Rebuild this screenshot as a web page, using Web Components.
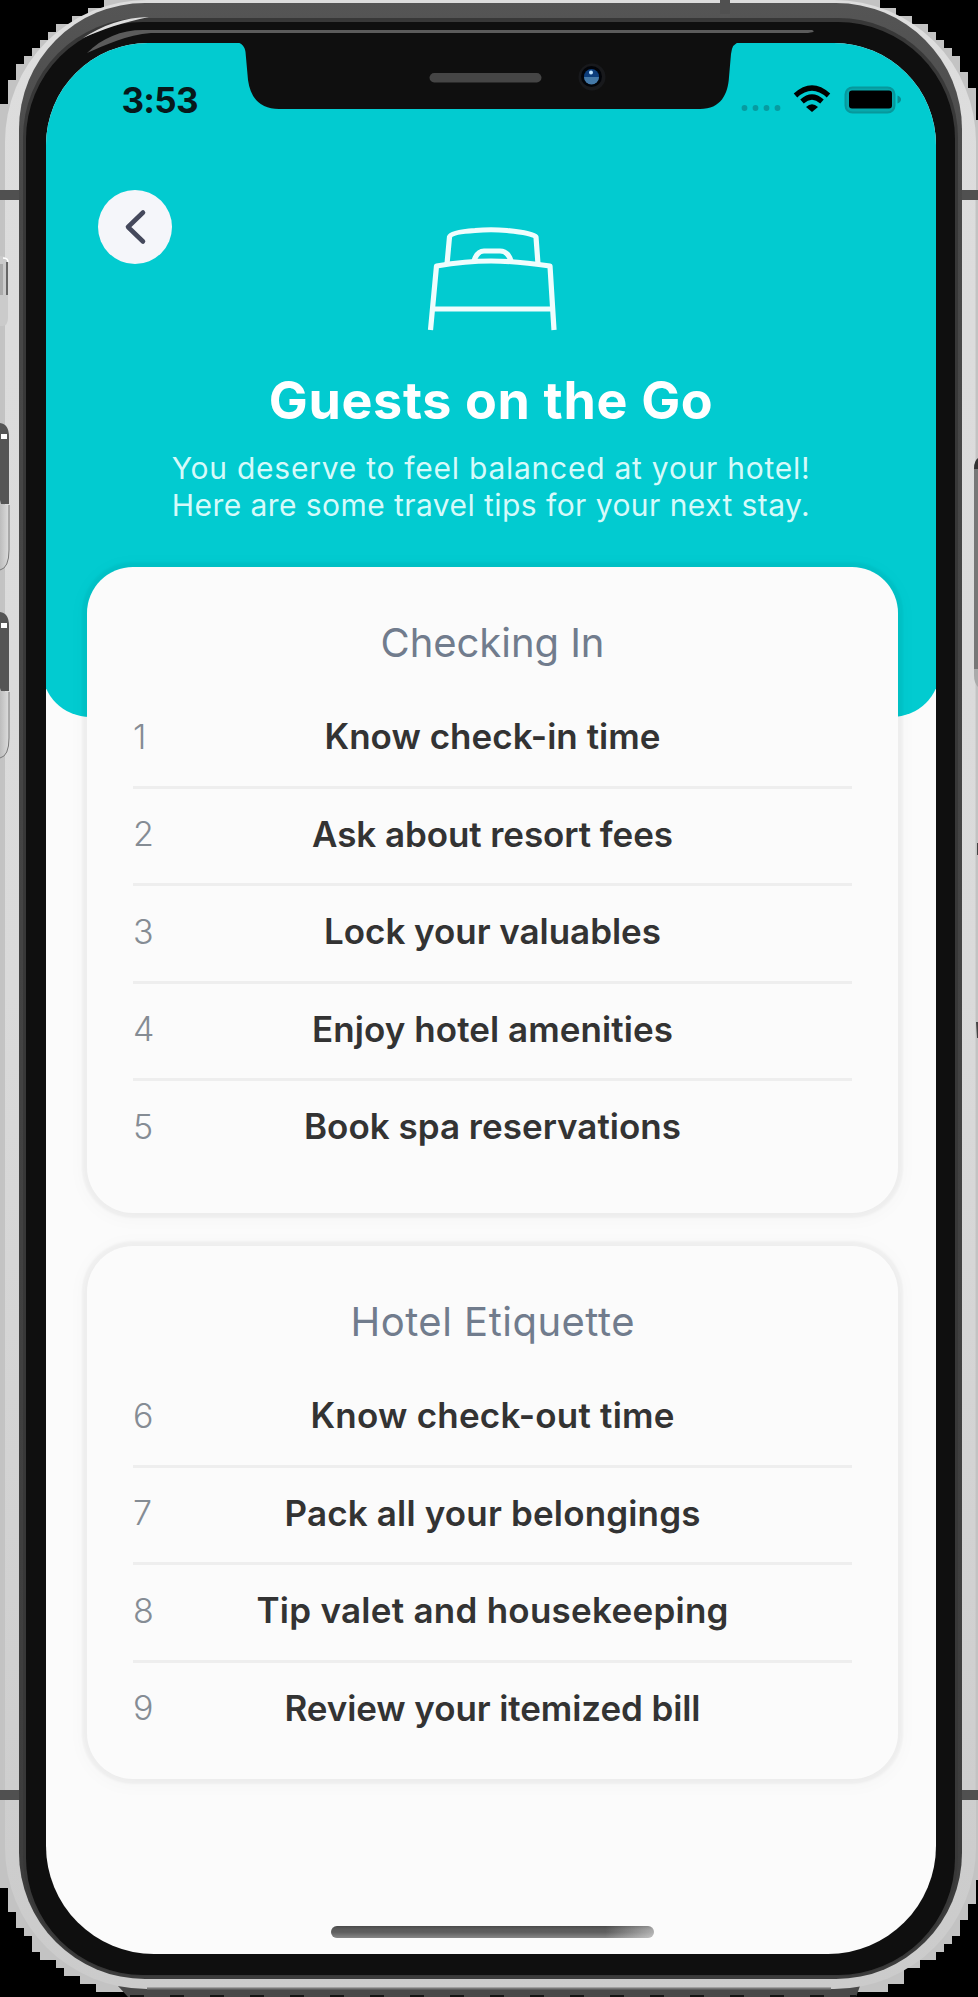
<!DOCTYPE html>
<html lang="en"><head><meta charset="utf-8"><title>Guests on the Go</title>
<style>
html,body{margin:0;background:#000}
body{width:978px;height:1997px;overflow:hidden;font-family:Inter,"Liberation Sans",sans-serif}
</style></head><body>
<phone-frame>
  <status-bar></status-bar>
  <guide-header>
    <fit-text slot="title" width="444">Guests on the Go</fit-text>
    <fit-text slot="line" width="638">You deserve to feel balanced at your hotel!</fit-text>
    <fit-text slot="line" width="638">Here are some travel tips for your next stay.</fit-text>
  </guide-header>
  <tip-card style="height:646px">
    <fit-text slot="heading" width="224">Checking In</fit-text>
    <tip-row number="1" width="336">Know check-in time</tip-row>
    <tip-row number="2" width="361">Ask about resort fees</tip-row>
    <tip-row number="3" width="337">Lock your valuables</tip-row>
    <tip-row number="4" width="361">Enjoy hotel amenities</tip-row>
    <tip-row number="5" width="377" last>Book spa reservations</tip-row>
  </tip-card>
  <tip-card style="height:533px;margin-top:1px">
    <fit-text slot="heading" width="284">Hotel Etiquette</fit-text>
    <tip-row number="6" width="364">Know check-out time</tip-row>
    <tip-row number="7" width="416">Pack all your belongings</tip-row>
    <tip-row number="8" width="472">Tip valet and housekeeping</tip-row>
    <tip-row number="9" width="416" last>Review your itemized bill</tip-row>
  </tip-card>
</phone-frame>
<script>
const define=(name,html,ready)=>customElements.define(name,class extends HTMLElement{
  connectedCallback(){
    if(this.shadowRoot)return;
    const t=document.createElement('template');t.innerHTML=html;
    this.attachShadow({mode:'open'}).append(t.content.cloneNode(true));
    if(ready)ready(this,this.shadowRoot);
  }
});

define('phone-frame',`<style>
:host{display:flow-root;position:relative;width:978px;height:1997px;overflow:hidden}
svg{position:absolute;left:0;top:0}
.screen{box-sizing:border-box;position:relative;width:890.500px;height:1911px;margin:43px 0 0 45.500px;background:#fbfbfb;border-radius:102px 102px 108px 108px;overflow:hidden}
.content{display:flex;flex-direction:column;gap:32px}
.top{pointer-events:none}
</style>
<svg width="978" height="1997" viewBox="0 0 978 1997">
<defs><linearGradient id="body" x2="0" y2="1"><stop stop-color="#ddd"/><stop offset=".5" stop-color="#dadada"/><stop offset="1" stop-color="#cbcbcb"/></linearGradient>
<linearGradient id="rim" x2="0" y2="1"><stop stop-color="#555"/><stop offset=".1" stop-color="#484848"/><stop offset="1" stop-color="#3c3c3c"/></linearGradient>
<linearGradient id="btn" x2="1"><stop stop-color="#bdbdbd"/><stop offset="1" stop-color="#ddd"/></linearGradient></defs>
<rect width="978" height="1997" fill="#c3c3c3"/>
<path d="M0 0H104V8H88V16H72V24H56V32H48V40H40V48H32V56H24V64H16V80H8V104H0ZM978 0H880V8H896V16H912V24H928V32H936V40H944V48H952V56H960V72H968V88H976V120H978ZM0 1888H8V1912H16V1928H24V1936H32V1952H40V1960H56V1968H64V1976H80V1984H96V1992H128V1997H0ZM978 1880H976V1904H968V1920H960V1936H952V1944H944V1952H936V1960H920V1968H904V1984H888V1992H856V1997H978Z"/>
<path d="M118 1986H860L856 1997H128Z" fill="#494949"/>
<path d="M130 1996H856" stroke="#151515" stroke-width="2" stroke-dasharray="14 26"/>
<rect x="5" y="0" width="971" height="1989" rx="142" fill="url(#body)"/>
<path d="M147 1988.500H831" stroke="#777" stroke-width="2"/>
<path d="M3.500 200V1790M976 200V1790" stroke="#c4c4c4"/>
<path d="M0 190H20V200H0ZM958 190H978V200H958ZM0 1790H20V1800H0ZM958 1790H978V1800H958Z" fill="#505050"/>
<rect x="19" y="3" width="943" height="1976" rx="126" fill="url(#rim)"/>
<path d="M720 0H730V14H720Z" fill="#505050"/>
<rect x="23" y="18" width="935" height="1958" rx="120" fill="#383838"/>
<rect x="26" y="22" width="929" height="1953" rx="117" fill="#0f0f0f"/>
<path d="M83 38C101 26 125 17 149 17C124 22 103 29 83 38Z" fill="#ddd"/>
<path d="M87 53C102 38 121 30 143 30H812Q817 32 808 33H151C127 35 105 45 87 53Z" fill="#5b5b5b"/>
<path d="M0 423Q9 424 9 437V504H1L0 500Z" fill="#555"/><path d="M0 505H9V550Q9 568 0 570Z" fill="url(#btn)"/><path d="M9 505V550Q9 568 0 570" fill="none" stroke="#777"/><path d="M1 434h6v5H1z" fill="#fff"/>
<path d="M0 612Q9 613 9 626V691H1L0 688Z" fill="#555"/><path d="M0 692H9V738Q9 756 0 758Z" fill="url(#btn)"/><path d="M9 692V738Q9 756 0 758" fill="none" stroke="#777"/><path d="M1 623h6v5H1z" fill="#fff"/>
<path d="M0 256Q8 256 8 264V318Q8 325 3 326H0Z" fill="#cbcbcb"/><path d="M0 264H3V295H0Z" fill="#aaa"/><path d="M7 262V295" stroke="#666" stroke-width="2"/><path d="M3 258Q8 258 8 262" fill="none" stroke="#fff" stroke-width="1.500"/>
<path d="M978 459Q974 462 974 469V669H978Z" fill="#777"/><path d="M974 669V675Q974 683 978 687V669Z" fill="#aaa"/><path d="M978 458Q974 461 974 469H978Z" fill="#333"/><path d="M977 843h1v12h-1zM976 1022h2v16h-1z" fill="#444"/>
</svg>
<div class="screen"><div class="content"><slot></slot></div></div>
<svg class="top" width="978" height="1997" viewBox="0 0 978 1997">
<path d="M236 42C242 43 245 47 245.500 52L248 80Q252 109 279 109H700C721 109 728 94 729 77L731 54Q732 43 740 42Z" fill="#0f0f0f"/>
<rect x="429.500" y="73" width="112" height="9.500" rx="4.700" fill="#454545"/>
<circle cx="592" cy="77" r="13.500" fill="#18191c"/><circle cx="591.500" cy="76.500" r="10.500" fill="#020409"/><circle cx="591.500" cy="76.500" r="7.500" fill="#0c3d7c"/><path d="M584 77H599A7.500 7.500 0 0 1 584 77" fill="#4479a8"/><circle cx="591" cy="72.500" r="2" fill="#c0e4ff"/>
<defs><linearGradient id="home"><stop stop-color="#555"/><stop offset=".85" stop-color="#555"/><stop offset="1" stop-color="#aaa"/></linearGradient>
<linearGradient id="sheen" x2="0" y2="1"><stop stop-color="#000" stop-opacity=".15"/><stop offset=".5" stop-color="#fff" stop-opacity=".05"/><stop offset="1" stop-color="#fff" stop-opacity=".3"/></linearGradient></defs>
<rect x="331" y="1926" width="323" height="12" rx="6" fill="url(#home)"/><rect x="331" y="1926" width="323" height="12" rx="6" fill="url(#sheen)"/>
</svg>`);

define('status-bar',`<style>
:host{position:absolute;left:0;right:0;top:0;height:110px;z-index:2;color:#07191b}
.bar{display:flex;justify-content:space-between;align-items:flex-start;padding:36px 35px 0 75.500px}
b{font-weight:650;font-size:35px;line-height:42px;width:78px}
svg{display:block}
</style><div class="bar"><b><fit-text width="77">3:53</fit-text></b>
<svg width="165" height="40" viewBox="736 79 165 40">
<g fill="#079ba0"><circle cx="744.500" cy="108" r="2.900"/><circle cx="755.500" cy="108" r="2.900"/><circle cx="766.500" cy="108" r="2.900"/><circle cx="777.500" cy="108" r="2.900"/></g>
<g fill="none" stroke="#000" stroke-width="5.200"><path d="M795.500 95.500Q812 80.500 828.500 95.500"/><path d="M802 101.500Q812 92.500 822 101.500"/></g><path d="M806 107Q812 101.500 818 107L812 112Z"/>
<rect x="845.500" y="87.500" width="49" height="25" rx="7" fill="#06a9ad" stroke="#07989c" stroke-width="2"/><rect x="849" y="90.500" width="43" height="18" rx="3"/><path d="M897.500 95.500Q901 97 901 99.500T897.500 103.500Z" fill="#078e92"/>
</svg></div>`);

define('guide-header',`<style>
:host{display:block;height:492px;color:#fff}
.bg{position:absolute;left:-4px;right:-4px;top:0;height:674px;background:#02cbd0;border-radius:0 0 48px 48px}
.in{position:relative;display:flex;flex-direction:column;align-items:center;padding-top:183px}
.back{position:absolute;left:52.500px;top:147px;width:74px;height:74px;border-radius:50%;background:#f5f6fa;display:grid;place-items:center}
.title{font-size:52px;font-weight:700;line-height:60px;margin-top:39px}
.lines{font-size:30px;line-height:36.500px;margin-top:19px;color:#d6fafa}
svg{display:block}
</style><div class="bg"></div><div class="in">
<div class="back"><svg width="28" height="38" viewBox="0 0 28 38"><path d="M22 4.500L7 19L22 33.500" fill="none" stroke="#45495c" stroke-width="4.600" stroke-linecap="round" stroke-linejoin="round"/></svg></div>
<svg width="132" height="106" viewBox="425 226 132 106"><g fill="none" stroke="#effdfd" stroke-width="5.200" stroke-linejoin="round"><path d="M447 264L449.500 237Q451 232 475 230.500Q491 229 507 230.500Q533 233 536 237L538 264"/><path d="M430.500 330L436.500 266Q466 261 491 261T550 266L554 330M434 309H551"/><path d="M474 261Q477 251 484 251H500Q508 251 511 261"/></g></svg>
<div class="title"><slot name="title"></slot></div><div class="lines"><slot name="line"></slot></div></div>`);

define('tip-card',`<style>
:host{display:block;position:relative;box-sizing:border-box;width:811px;margin-left:41.500px;padding:46px 46px 0;border-radius:46px;background:#fbfbfb;box-shadow:0 0 2px 5px #00000009,0 2px 20px 3px #00000008}
.h{font-size:40px;line-height:60px;color:#717c8d;margin-bottom:18px}
</style><div class="h"><slot name="heading"></slot></div><slot></slot>`);

define('tip-row',`<style>
:host{display:flex;align-items:center;position:relative;box-sizing:border-box;height:97.500px;padding-bottom:4px;border-bottom:3px solid #eee;font-size:35px;color:#333;font-weight:600}
:host([last]){border-color:transparent}
.n{width:0;font-weight:300;color:#858c94;font-size:34px}
.t{flex:1;text-align:center}
</style><span class="n"></span><span class="t"></span>`,(el,r)=>{
  r.querySelector('.n').textContent=el.getAttribute('number');
  const f=document.createElement('fit-text');f.setAttribute('width',el.getAttribute('width'));f.textContent=el.textContent;
  r.querySelector('.t').append(f);
});

// Registered last, so the surrounding fonts already apply when it measures itself.
define('fit-text',`<style>:host{display:block;white-space:nowrap;text-align:center}span{display:inline-block}</style><span><slot></slot></span>`,(el,root)=>{
  const s=root.querySelector('span'),n=el.textContent.length;
  const gap=(+el.getAttribute('width')-s.getBoundingClientRect().width)/(n-1);
  s.style.letterSpacing=gap+'px';s.style.marginRight=-gap+'px';
});
</script></body></html>
